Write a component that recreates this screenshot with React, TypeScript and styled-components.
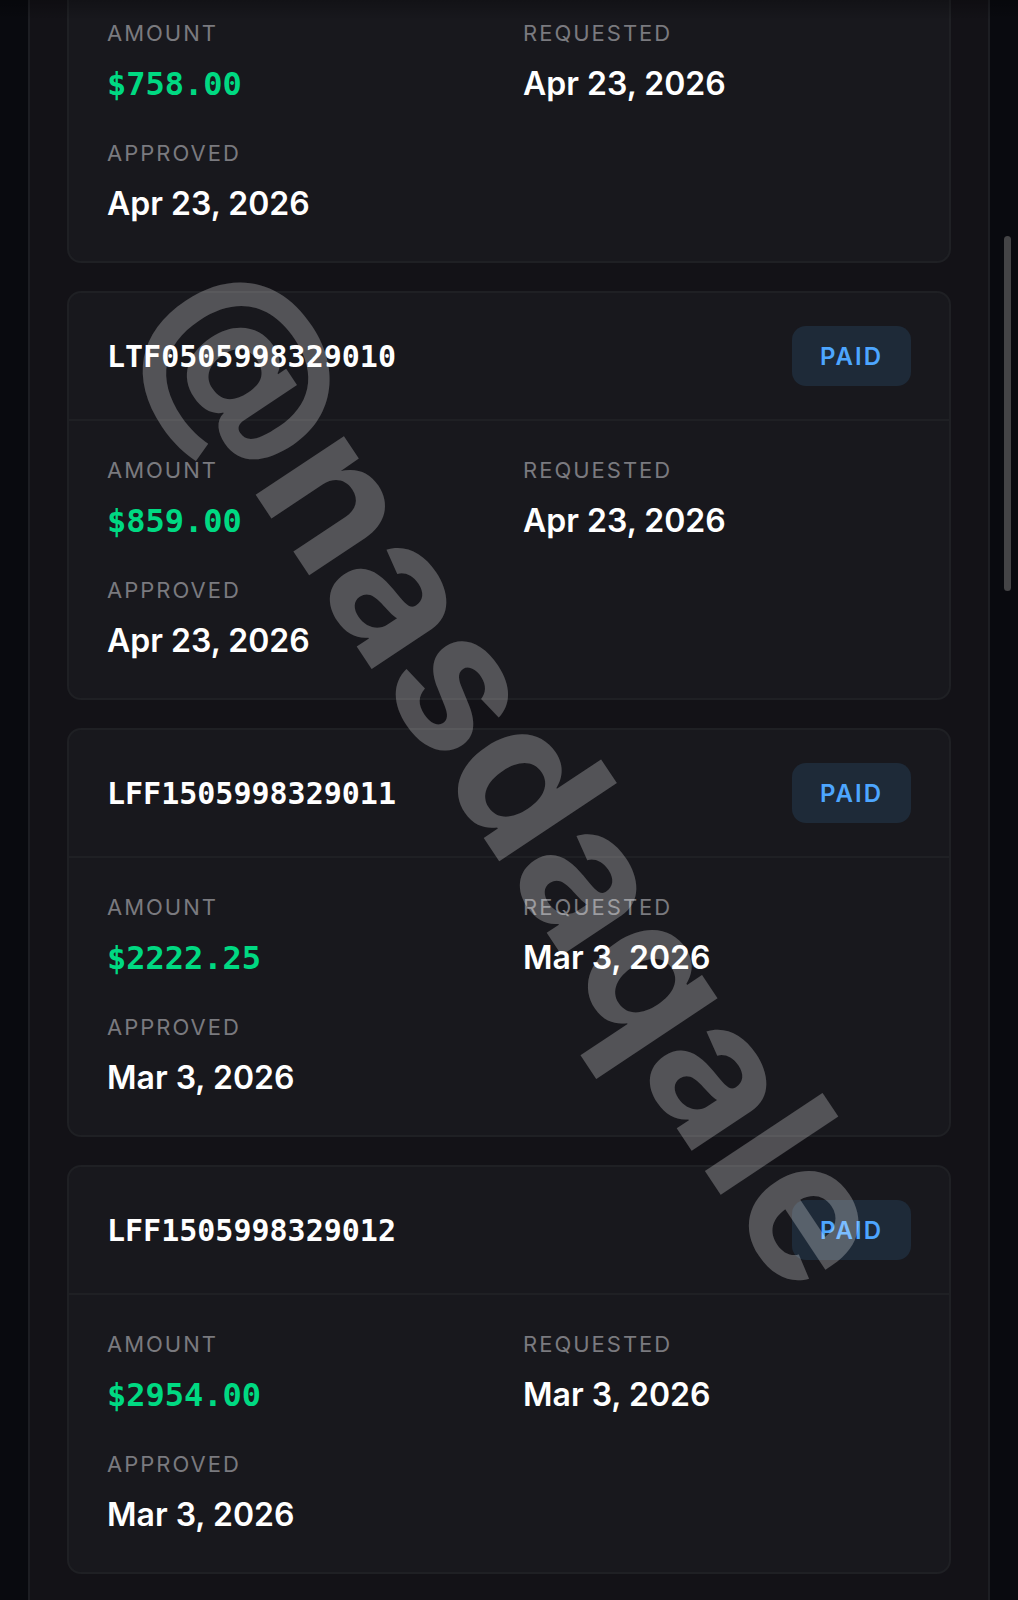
import React from "react";
import styled, { createGlobalStyle } from "styled-components";

const sans = `Inter, "Liberation Sans", sans-serif`;
const mono = `"DejaVu Sans Mono", "Liberation Mono", monospace`;

const GlobalStyle = createGlobalStyle`
  *, *::before, *::after { box-sizing: border-box; }
  body {
    margin: 0;
    background: #090a0f;
    color: #ffffff;
    font-family: ${sans};
  }
`;

const Page = styled.main`
  position: relative;
  display: flex;
  min-height: 100vh;
  padding: 0 28px;
  overflow: hidden;
`;

const Panel = styled.section`
  flex: 1;
  display: flex;
  flex-direction: column;
  gap: 28px;
  padding: 0 37px 26px;
  background: #131217;
  border: solid #1d1e23;
  border-width: 0 2px;
`;

const Card = styled.article<{ $continued?: boolean }>`
  background: #18181d;
  border: 2px solid #1f2024;
  border-top-width: ${(p) => (p.$continued ? 0 : 2)}px;
  border-radius: ${(p) => (p.$continued ? "0 0 14px 14px" : "14px")};
`;

const CardHeader = styled.header`
  display: flex;
  align-items: center;
  justify-content: space-between;
  padding: 33px 38px;
  border-bottom: 2px solid #1f2024;
`;

const Reference = styled.h2`
  margin: 0;
  padding-top: 2px;
  font: 700 30px/40px ${mono};
`;

const Badge = styled.span`
  padding: 1px 28px 0;
  border-radius: 14px;
  background: #1e2a38;
  color: #4da6ff;
  font-size: 24px;
  font-weight: 600;
  line-height: 59px;
  letter-spacing: 2px;
`;

const Details = styled.dl<{ $continued?: boolean }>`
  display: grid;
  grid-template-columns: repeat(2, minmax(0, 1fr));
  gap: 28px;
  margin: 0;
  padding: ${(p) => (p.$continued ? 17 : 33)}px 38px 32px;
`;

const Field = styled.div`
  display: flex;
  flex-direction: column;
  gap: 10px;
`;

const Label = styled.dt`
  color: #7a7a7f;
  font-size: 22px;
  line-height: 32px;
  letter-spacing: 2px;
`;

const Value = styled.dd`
  margin: 0;
  font-size: 32px;
  font-weight: 600;
  line-height: 50px;
`;

const Amount = styled(Value)`
  color: #00d982;
  font-family: ${mono};
  font-weight: 700;
`;

const Watermark = styled.div`
  position: absolute;
  top: 772px;
  left: 51.5%;
  color: rgba(255, 255, 255, 0.26);
  font-size: 194px;
  font-weight: 700;
  line-height: 1;
  white-space: nowrap;
  transform: translate(-50%, -50%) rotate(56.4deg);
  pointer-events: none;
`;

const TopShade = styled.div`
  position: absolute;
  inset: 0 0 auto;
  height: 20px;
  background: linear-gradient(rgba(0, 0, 0, 0.25), transparent);
  pointer-events: none;
`;

const ScrollThumb = styled.div`
  position: absolute;
  top: 236px;
  right: 7px;
  width: 7px;
  height: 355px;
  border-radius: 4px;
  background: #444446;
`;

type Payout = {
  id?: string;
  amount: string;
  requested: string;
  approved: string;
};

const payouts: Payout[] = [
  { amount: "$758.00", requested: "Apr 23, 2026", approved: "Apr 23, 2026" },
  { id: "LTF0505998329010", amount: "$859.00", requested: "Apr 23, 2026", approved: "Apr 23, 2026" },
  { id: "LFF1505998329011", amount: "$2222.25", requested: "Mar 3, 2026", approved: "Mar 3, 2026" },
  { id: "LFF1505998329012", amount: "$2954.00", requested: "Mar 3, 2026", approved: "Mar 3, 2026" },
];

function PayoutCard({ id, amount, requested, approved }: Payout) {
  const continued = !id;
  return (
    <Card $continued={continued}>
      {id && (
        <CardHeader>
          <Reference>{id}</Reference>
          <Badge>PAID</Badge>
        </CardHeader>
      )}
      <Details $continued={continued}>
        <Field>
          <Label>AMOUNT</Label>
          <Amount>{amount}</Amount>
        </Field>
        <Field>
          <Label>REQUESTED</Label>
          <Value>{requested}</Value>
        </Field>
        <Field>
          <Label>APPROVED</Label>
          <Value>{approved}</Value>
        </Field>
      </Details>
    </Card>
  );
}

export default function App() {
  return (
    <>
      <GlobalStyle />
      <Page>
        <Panel>
          {payouts.map((payout) => (
            <PayoutCard key={payout.id ?? "continued"} {...payout} />
          ))}
        </Panel>
        <TopShade />
        <Watermark>@nasdaqale</Watermark>
        <ScrollThumb />
      </Page>
    </>
  );
}
